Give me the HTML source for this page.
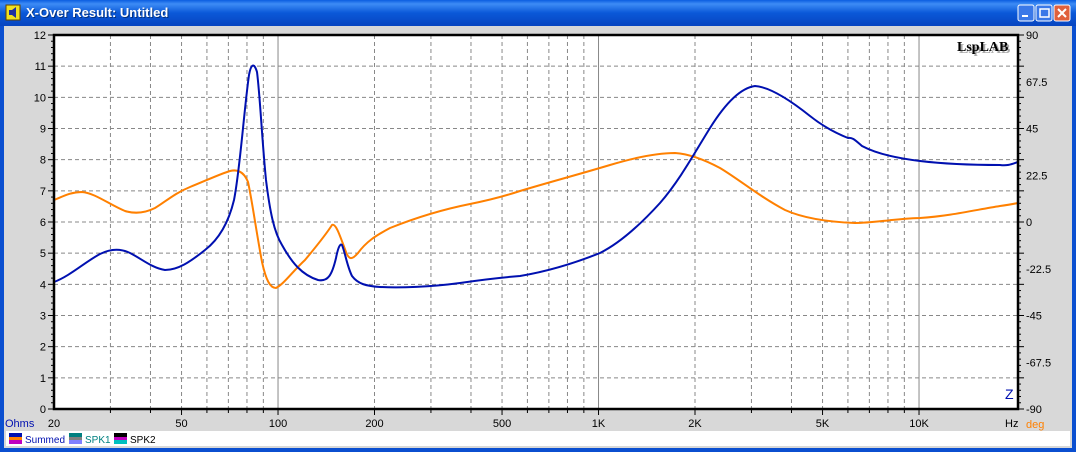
<!DOCTYPE html>
<html><head><meta charset="utf-8"><style>
html,body{margin:0;padding:0;width:1076px;height:452px;overflow:hidden;background:#d8d8d8}
svg{display:block}
text{font-family:"Liberation Sans",sans-serif}
</style></head><body>
<svg width="1076" height="452" viewBox="0 0 1076 452" xmlns="http://www.w3.org/2000/svg">
<defs>
<linearGradient id="tb" x1="0" y1="0" x2="0" y2="1">
<stop offset="0" stop-color="#0a5de0"/><stop offset="0.15" stop-color="#3d8cf5"/><stop offset="0.5" stop-color="#0a58d8"/><stop offset="1" stop-color="#0845c0"/></linearGradient>
</defs>
<rect x="0" y="0" width="1076" height="452" fill="#0b4fd0"/>
<rect x="0" y="0" width="1076" height="26" fill="url(#tb)"/>
<rect x="4" y="26" width="1068" height="422" fill="#d8d8d8"/>
<rect x="6" y="5" width="14" height="15" fill="#f0e020" stroke="#604000"/>
<path d="M9 10h3l4-3v11l-4-3H9z" fill="#2030a0"/>
<text x="27" y="18" font-size="13" font-weight="bold" fill="#000" opacity="0.4">X-Over Result: Untitled</text>
<text x="26" y="17" font-size="13" font-weight="bold" fill="#fff">X-Over Result: Untitled</text>
<rect x="1018" y="5" width="16" height="16" rx="2" fill="#3a78e8" stroke="#fff"/>
<rect x="1022" y="15" width="6" height="2" fill="#fff"/>
<rect x="1036" y="5" width="16" height="16" rx="2" fill="#3a78e8" stroke="#fff"/>
<rect x="1040" y="9" width="9" height="8" fill="none" stroke="#fff" stroke-width="1.5"/>
<rect x="1054" y="5" width="16" height="16" rx="2" fill="#e0603c" stroke="#fff"/>
<path d="M1058 9l8 8M1066 9l-8 8" stroke="#fff" stroke-width="2"/>
<rect x="54" y="35" width="964" height="374" fill="#fff"/>
<g id="grid" stroke="#888" stroke-width="1"></g>
<g id="ticks" stroke="#000" stroke-width="1"></g>
<g id="labels" font-size="11"></g>
<path id="ph" fill="none" stroke="#ff8000" stroke-width="2" d="M54,200 C62,197 70,192 82,192 C95,193 110,205 125,211 C135,214 145,213 155,208 C165,202 175,193 190,187 C205,181 220,174 230,171 C238,169 244,172 248,182 C252,200 256,230 262,262 C266,280 270,288 276,288 C284,284 292,272 305,260 C315,248 325,236 332,225 C336,223 340,236 346,252 C349,260 352,260 358,253 C366,242 375,236 390,228 C410,220 440,210 470,204 C490,200 505,196 520,191 C550,182 580,174 610,165 C630,159 655,153 675,153 C690,154 705,160 720,168 C740,180 760,197 785,210 C805,219 830,222 855,223 C875,223 890,219 920,218 C950,216 975,210 1000,206 C1008,205 1013,204 1018,203"/>
<path id="z" fill="none" stroke="#0010b0" stroke-width="2" d="M54,282 C70,276 85,262 100,254 C110,249 120,248 130,253 C142,259 152,268 165,270 C178,270 190,262 205,250 C218,240 228,225 234,200 C240,170 244,110 249,75 C251,64 254,62 257,72 C260,95 262,140 266,180 C270,212 274,232 282,245 C292,263 302,275 318,280 C328,282 332,275 336,258 C338,248 340,243 342,245 C345,252 347,266 352,276 C358,284 366,286 380,287 C400,288 430,287 460,283 C480,280 495,278 520,276 C550,271 575,263 600,253 C620,243 640,225 660,203 C680,180 695,152 710,128 C725,104 740,88 755,86 C770,87 790,100 810,116 C825,128 838,134 848,138 C852,137 855,140 862,146 C875,153 895,158 920,161 C945,164 970,165 1000,165 C1008,166 1012,164 1018,162"/>
<rect x="54" y="35" width="964" height="374" fill="none" stroke="#000" stroke-width="2.5"/>
<text x="959" y="53" style="font-family:'Liberation Serif',serif;font-size:14px;font-weight:bold" fill="#aaa">LspLAB</text>
<text x="957" y="51" style="font-family:'Liberation Serif',serif;font-size:14px;font-weight:bold" fill="#000">LspLAB</text>
<text x="1005" y="399" font-size="14" fill="#0010b0">Z</text>
<text x="5" y="427" font-size="11" fill="#0010b0">Ohms</text>
<text x="1005" y="427" font-size="11" fill="#000">Hz</text>
<text x="1026" y="428" font-size="11" fill="#ff8000">deg</text>
<rect x="6" y="431" width="1064" height="15" fill="#fff"/>
<rect x="9" y="433" width="13" height="4" fill="#0010b0"/><rect x="9" y="437" width="13" height="3" fill="#ff8000"/><rect x="9" y="440" width="13" height="4" fill="#c000c0"/>
<text x="25" y="443" font-size="10" fill="#0010b0">Summed</text>
<rect x="69" y="433" width="13" height="4" fill="#008080"/><rect x="69" y="437" width="13" height="3" fill="#808080"/><rect x="69" y="440" width="13" height="4" fill="#8080ff"/>
<text x="85" y="443" font-size="10" fill="#008080">SPK1</text>
<rect x="114" y="433" width="13" height="4" fill="#000"/><rect x="114" y="437" width="13" height="3" fill="#c000c0"/><rect x="114" y="440" width="13" height="4" fill="#00c0c0"/>
<text x="130" y="443" font-size="10" fill="#000">SPK2</text>
</svg>
<script>
var ns="http://www.w3.org/2000/svg";
function el(p,t,a,txt){var e=document.createElementNS(ns,t);for(var k in a)e.setAttribute(k,a[k]);if(txt!==undefined)e.textContent=txt;document.getElementById(p).appendChild(e);return e;}
function X(f){return 54+320.5*(Math.log10(f)-Math.log10(20));}
function Y(v){return 409-v*374/12;}
for(var v=1;v<12;v++){el("grid","line",{x1:54,x2:1018,y1:Y(v),y2:Y(v),"stroke-dasharray":"4,3"});}
var fs=[];[10,100,1000,10000].forEach(function(d){for(var m=1;m<10;m++){var f=m*d;if(f>20&&f<20000)fs.push(f);}});
fs.forEach(function(f){var x=X(f);var solid=(f==100||f==1000||f==10000);
el("grid","line",solid?{x1:x,x2:x,y1:35,y2:409}:{x1:x,x2:x,y1:35,y2:409,"stroke-dasharray":"4,3"});
el("ticks","line",{x1:x,x2:x,y1:409,y2:solid||[20,50,200,500,2000,5000].indexOf(f)>=0?415:413});});
for(var i=0;i<=60;i++){var y=409-i*374/60;var big=i%5==0;el("ticks","line",{x1:big?48:51,x2:54,y1:y,y2:y});el("ticks","line",{x1:1018,x2:big?1024:1021,y1:y,y2:y});}
for(var v=0;v<=12;v++)el("labels","text",{x:46,y:Y(v)+4,"text-anchor":"end"},String(v));
var deg=["90","67.5","45","22.5","0","-22.5","-45","-67.5","-90"];
deg.forEach(function(d,i){el("labels","text",{x:1026,y:35+i*374/8+4},d);});
[[20,"20"],[50,"50"],[100,"100"],[200,"200"],[500,"500"],[1000,"1K"],[2000,"2K"],[5000,"5K"],[10000,"10K"]].forEach(function(a){el("labels","text",{x:X(a[0]),y:427,"text-anchor":"middle"},a[1]);});
</script>
</body></html>
